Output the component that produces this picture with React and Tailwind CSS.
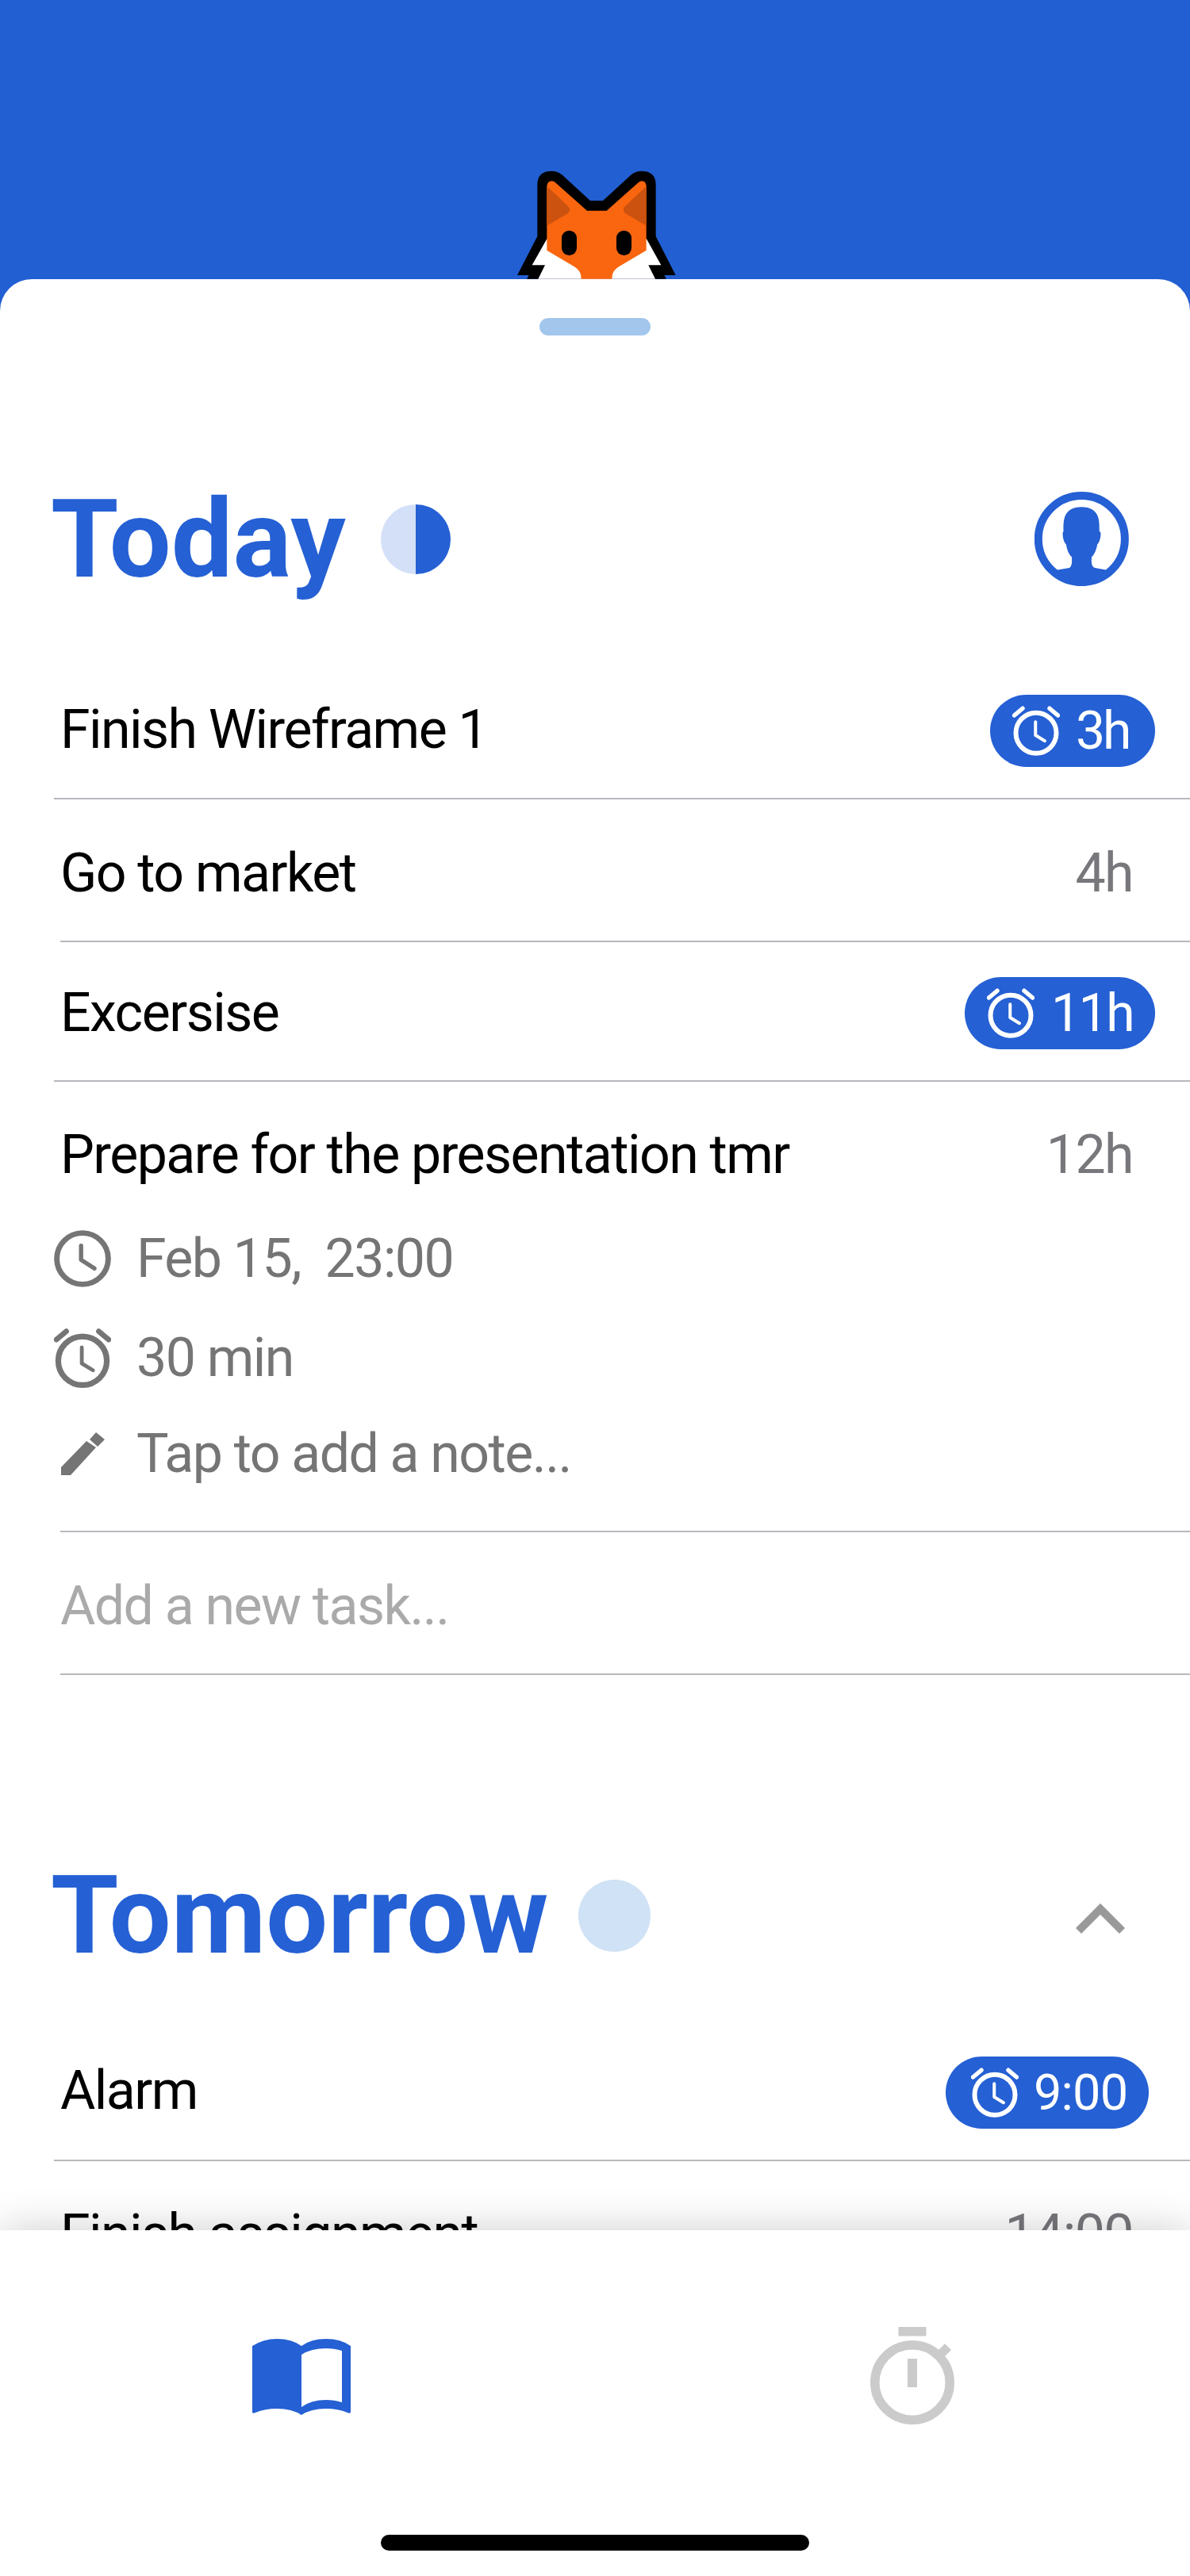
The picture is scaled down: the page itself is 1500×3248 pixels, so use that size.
import React from "react";

const AlarmIcon = ({ className, stroke = "currentColor" }) => (
  <svg viewBox="0 0 24 25" className={className} fill="none" stroke={stroke} strokeLinecap="round" strokeLinejoin="round">
    <circle cx="12" cy="13.6" r="10.2" strokeWidth="2.4" />
    <path d="M1 4.7 5.2 1.2M23 4.7 18.8 1.2" strokeWidth="2.2" />
    <path d="M11.7 8v6.7l4.7 2.9" strokeWidth="1.6" />
  </svg>
);

const ClockIcon = ({ className }) => (
  <svg viewBox="0 0 24 24" className={className} fill="none" stroke="currentColor" strokeLinecap="round" strokeLinejoin="round">
    <circle cx="12" cy="12" r="10.8" strokeWidth="2.3" />
    <path d="M11.4 6.6v5.9l5.6 3.6" strokeWidth="1.8" />
  </svg>
);

const PencilIcon = ({ className }) => (
  <svg viewBox="0 0 55 55" className={className} fill="currentColor">
    <path d="M0 44 32 11 44 19 12 54H0Z" />
    <path d="M44 0 55 9 46 18 36 9Z" />
  </svg>
);

const Fox = ({ className }) => (
  <svg viewBox="300 100 612 416" className={className}>
    <path d="M382 160Q382 108 436 108Q460 108 475 122L582 220H630L737 122Q752 108 775 108Q830 108 830 160V355L905 502H862L870 516H342L350 502H306L382 355Z" fill="#000" />
    <path d="M418 365 362 464H411L385 516H828L802 464H850L795 365Z" fill="#fff" />
    <path d="M418 170Q418 146 436 146Q445 146 452 153L570 258H644L762 153Q770 146 778 146Q794 146 794 170V408L690 470Q664 485 664 516H548Q548 485 522 470L418 408Z" fill="#f9660f" />
    <path d="M418 165 497 240Q512 255 497 268L418 315ZM794 165 715 240Q700 255 715 268L794 315Z" fill="#cb520f" />
    <rect x="474" y="333" width="57" height="94" rx="28" fill="#000" />
    <rect x="681" y="333" width="57" height="94" rx="28" fill="#000" />
  </svg>
);

const Avatar = ({ className }) => (
  <svg viewBox="613 120 358 358" className={className}>
    <circle cx="791.5" cy="299" r="164" fill="none" stroke="#2560d4" strokeWidth="30" />
    <path fill="#2560d4" d="M723 270C722 230 722 178 791 178C860 178 860 230 859 270L864 275C865 295 858 315 851 320C847 345 838 360 830 367C828 385 828 405 842 409L887 417C850 460 820 478 791 478C762 478 732 460 697 417L745 409C755 405 756 385 754 367C745 360 737 345 733 320C726 315 719 295 720 275Z" />
  </svg>
);

const BookIcon = ({ className }) => (
  <svg viewBox="0 0 124 96" className={className}>
    <path fill="#2560d4" fillRule="evenodd" d="M0 9Q14 0 31 0Q50 0 62 9Q74 0 93 0Q112 0 124 9V92Q124 95 120 93Q108 88 93 88Q74 88 62 96Q50 88 31 88Q16 88 4 93Q0 95 0 92ZM62 20V86Q74 77 93 77Q104 77 113 80V15Q104 12 93 12Q74 12 62 20Z" />
  </svg>
);

const TimerIcon = ({ className }) => (
  <svg viewBox="0 0 106 123" className={className} fill="#cbcbcb">
    <circle cx="53" cy="70" r="47.2" fill="none" stroke="#cbcbcb" strokeWidth="11.5" />
    <rect x="35.5" y="0" width="35" height="11.5" />
    <rect x="47" y="40" width="12" height="36" />
    <path d="M86 29 94 21 102 29 94 37Z" />
  </svg>
);

const Badge = ({ children, className, textClass }) => (
  <span className={`flex h-[91px] items-center rounded-full bg-[#2560d4] text-white ${className}`}>
    <AlarmIcon className="h-[63px] w-[60px] shrink-0" />
    <span className={`leading-none ${textClass}`}>{children}</span>
  </span>
);

const Row = ({ label, right, inset, className = "", labelClass = "", children }) => (
  <div className={`border-b-2 border-[#b8b8bd] ${inset ? "ml-[76px]" : "ml-[68px]"} ${className}`}>
    <div className={`flex h-[91px] items-center justify-between ${inset ? "" : "pl-[8px]"}`}>
      <span className={`text-[68px] leading-none tracking-[-1.55px] text-black ${labelClass}`}>{label}</span>
      {right}
    </div>
    {children}
  </div>
);

const Time = ({ children, className = "" }) => (
  <span className={`mr-[72px] text-[68px] leading-none tracking-[-1.55px] text-[#77777c] ${className}`}>{children}</span>
);

const Detail = ({ icon, children, className = "" }) => (
  <div className={`flex items-center text-[#757575] ${className}`}>
    <span className="flex w-[172px] shrink-0 pl-[68px]">{icon}</span>
    <span className="text-[68px] leading-none tracking-[-1.55px]">{children}</span>
  </div>
);

export default function App() {
  return (
    <div className="relative flex h-[3248px] w-[1500px] flex-col overflow-hidden bg-[#225fd3] font-['Roboto',sans-serif]">
      <Fox className="absolute left-[650px] top-[213.33px] h-[138.67px] w-[204px]" />
      <div className="h-[352px] shrink-0" />
      <main className="relative h-[2460px] shrink-0 overflow-hidden rounded-t-[40px] bg-white">
        <div className="mx-auto mt-[49px] h-[22px] w-[140px] rounded-full bg-[#a2c6ec]" />

        <div className="mt-[197px] flex h-[119px] items-center justify-between pl-[64px] pr-[77px]">
          <div className="flex items-center">
            <h1 className="text-[138px] font-bold leading-none text-[#2560d4]">Today</h1>
            <div className="ml-[44px] flex h-[88px] w-[88px] overflow-hidden rounded-full">
              <div className="w-1/2 bg-[#d3e0f7]" />
              <div className="w-1/2 bg-[#2560d4]" />
            </div>
          </div>
          <Avatar className="h-[119px] w-[119px]" />
        </div>

        <div className="mt-[92px]">
          <Row label="Finish Wireframe 1" labelClass="mt-[3px]" className="pt-[42px] pb-[42px]" right={<Badge className="mr-[44px] mt-[6px] w-[208px] pl-[28px]" textClass="ml-[20px] text-[66px] tracking-[-3px]">3h</Badge>} />
          <Row label="Go to market" labelClass="mt-[3px]" inset className="pt-[46px] pb-[41px]" right={<Time className="mt-[3px]">4h</Time>} />
          <Row label="Excersise" labelClass="mt-[3px]" className="pt-[42px] pb-[41px]" right={<Badge className="mr-[44px] mt-[4px] w-[240px] pl-[28px]" textClass="ml-[21px] text-[66px] tracking-[-2.5px]">11h</Badge>} />
          <Row label="Prepare for the presentation tmr" inset className="pt-[46px] pb-[69px]" right={<Time>12h</Time>}>
            <div className="-ml-[76px]">
              <Detail className="mt-[50px] h-[72px]" icon={<ClockIcon className="h-[72px] w-[72px]" />}>Feb 15,&nbsp; 23:00</Detail>
              <Detail className="mt-[51px] h-[76px]" icon={<AlarmIcon className="h-[75px] w-[72px]" />}>30 min</Detail>
              <Detail className="mt-[55px] h-[56px]" icon={<PencilIcon className="ml-[9px] h-[55px] w-[55px]" />}>Tap to add a note...</Detail>
            </div>
          </Row>
          <Row label={<span className="text-[#aaaaaa]">Add a new task...</span>} inset className="pt-[47px] pb-[40px]" />
        </div>

        <div className="mt-[235px] flex h-[136px] items-center justify-between pl-[64px] pr-[82px]">
          <div className="flex items-center">
            <h2 className="text-[138px] font-bold leading-none text-[#2560d4]">Tomorrow</h2>
            <div className="ml-[38px] h-[91px] w-[91px] rounded-full bg-[#d0e2f5]" />
          </div>
          <svg viewBox="0 0 62 38" className="mt-[8px] h-[38px] w-[62px]" fill="none" stroke="#999999" strokeWidth="10">
            <path d="M3.5 34.5 31 7l27.5 27.5" />
          </svg>
        </div>

        <div className="mt-[70px]">
          <Row label="Alarm" labelClass="mb-[6px]" className="pt-[40px] pb-[39px]" right={<Badge className="mr-[52px] w-[256px] pl-[32px]" textClass="ml-[19px] text-[63px] tracking-[-0.8px]">9:00</Badge>} />
          <Row label="Finish assignment" inset className="pb-[60px] pt-[46px]" right={<Time>14:00</Time>} />
        </div>
      </main>

      <nav className="relative z-10 h-[436px] shrink-0 bg-white shadow-[0_0_50px_rgba(0,0,0,0.2)]">
        <div className="flex items-start pl-[318px] pt-[122px]">
          <BookIcon className="mt-[15px] h-[96px] w-[124px]" />
          <TimerIcon className="ml-[655px] h-[123px] w-[106px]" />
        </div>
        <div className="mx-auto mt-[139px] h-[20px] w-[540px] rounded-full bg-black" />
      </nav>
    </div>
  );
}
